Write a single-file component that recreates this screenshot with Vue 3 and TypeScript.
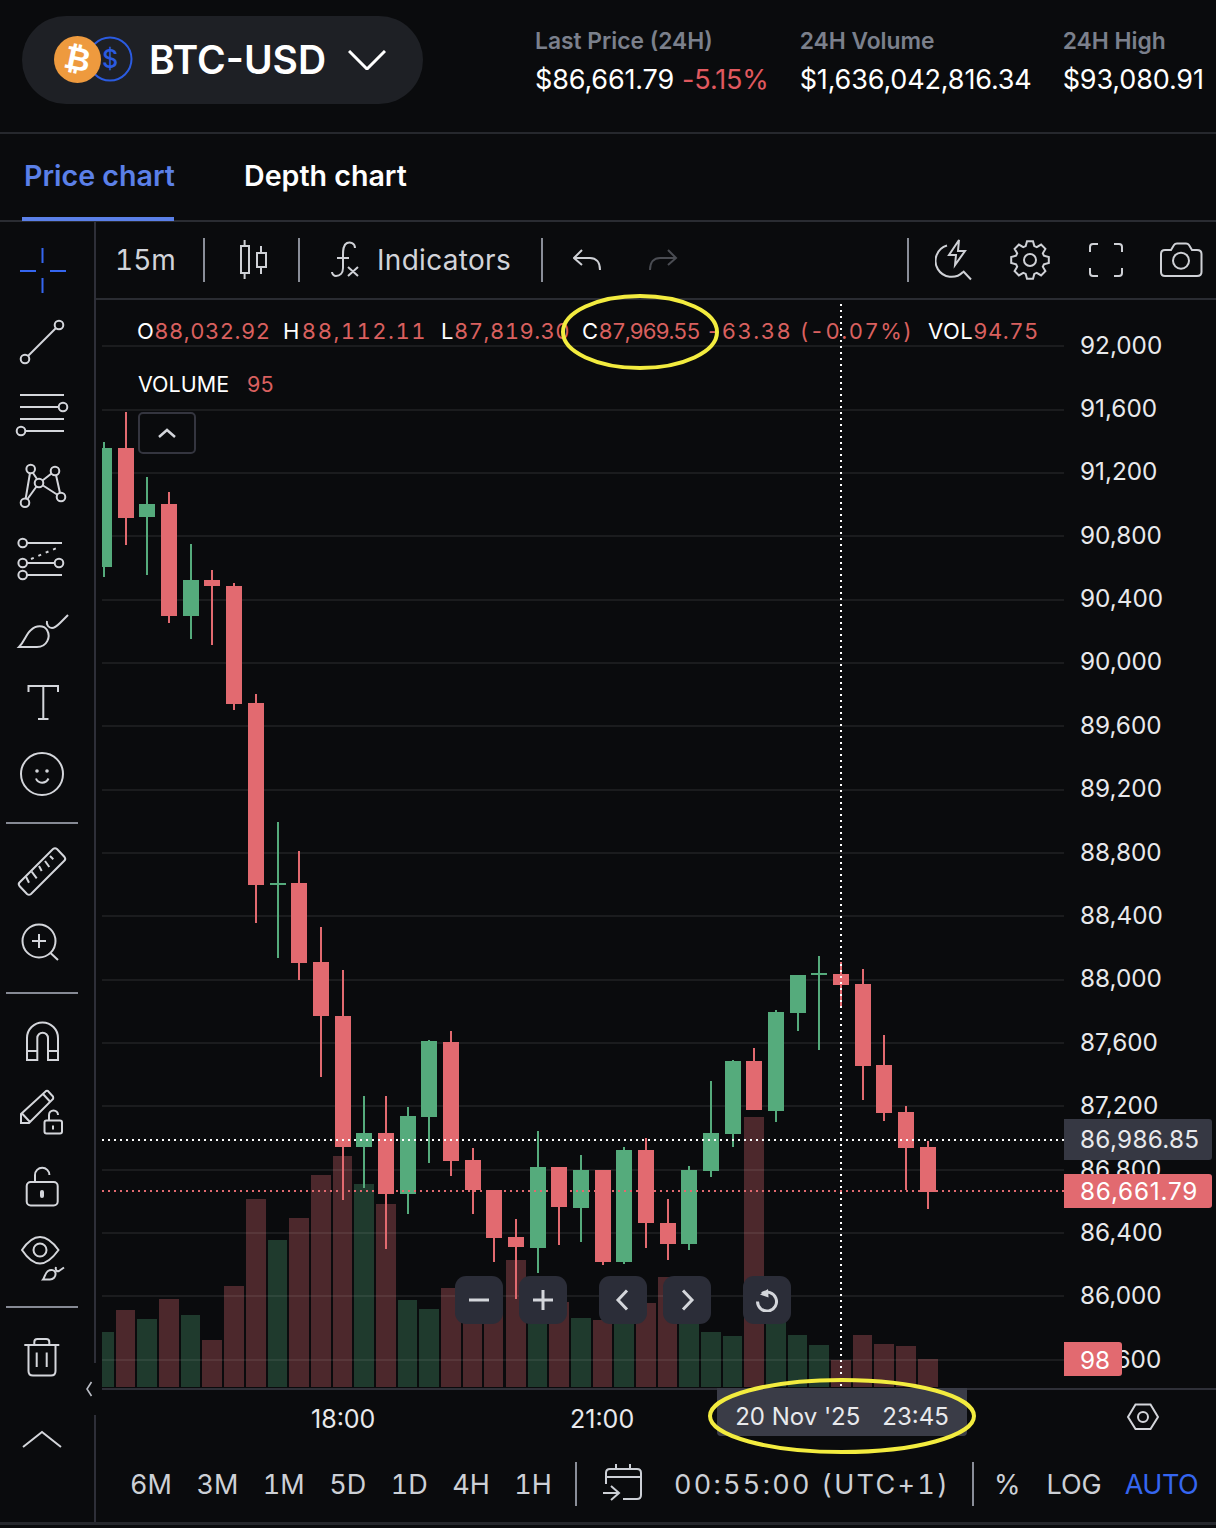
<template>
  <div class="page">
    <header class="top">
      <div class="pair">
        <svg class="pair-icon" width="80" height="50" viewBox="54 38 80 50">
          <circle cx="110" cy="62" r="21.5" fill="none" stroke="#2b5be0" stroke-width="2" />
          <text x="110" y="71" text-anchor="middle" class="usd">$</text>
          <circle cx="77.5" cy="62.5" r="23.5" fill="#ee9a3e" />
          <text x="77.5" y="73" text-anchor="middle" class="btc" transform="rotate(12 77.5 62.5)">₿</text>
        </svg>
        <span class="pair-name">BTC-USD</span>
        <svg width="38" height="20" viewBox="348 50 38 20" class="pair-caret">
          <path d="M349 51 L367 69 L385 51" fill="none" stroke="#fff" stroke-width="3" />
        </svg>
      </div>
      <div class="stats">
        <div v-for="s in stats" :key="s.label" class="stat">
          <div class="stat-label">{{ s.label }}</div>
          <div class="stat-value">
            {{ s.value }}<span v-if="s.change" class="stat-change">{{ s.change }}</span>
          </div>
        </div>
      </div>
    </header>

    <nav class="tabs">
      <a class="tab active">Price chart</a>
      <a class="tab">Depth chart</a>
    </nav>

    <div class="workspace">
      <aside class="tools">
        <svg class="tool" viewBox="12 240 60 60">
          <path d="M20 271 H36 M50 271 H66 M42.5 248 V263 M42.5 278 V293" stroke="#3566f0" />
        </svg>
        <svg class="tool" viewBox="12 312 60 60">
          <circle cx="59" cy="325" r="4.3" /><circle cx="25" cy="359" r="4.3" />
          <path d="M56 328 L28 356" />
        </svg>
        <svg class="tool" viewBox="12 384 60 60">
          <path d="M20 395 H64 M20 407 H58 M20 419 H64 M25 431 H64" />
          <circle cx="63" cy="407" r="4.3" /><circle cx="21" cy="431" r="4.3" />
        </svg>
        <svg class="tool" viewBox="12 456 60 60">
          <circle cx="30.7" cy="469" r="4.3" /><circle cx="55" cy="471" r="4.3" />
          <circle cx="39" cy="483" r="4.3" /><circle cx="61" cy="497" r="4.3" />
          <circle cx="25" cy="502.7" r="4.3" />
          <path d="M33 473 L37 479 M30 473 L25.700 498.500 M42.500 480.500 L51.500 473.500 M43 485.500 L57 494.500 M56 475 L60 493 M36.500 486.500 L27.500 499" />
        </svg>
        <svg class="tool" viewBox="12 528 60 60">
          <circle cx="22.7" cy="543" r="4.3" /><circle cx="22.7" cy="563" r="4.3" />
          <circle cx="59" cy="563" r="4.3" /><circle cx="22.7" cy="575" r="4.3" />
          <path d="M27 543 H62 M27 563 H55 M27 575 H62" />
          <path d="M31 559 L59 547" stroke-dasharray="3 5" />
        </svg>
        <svg class="tool" viewBox="12 600 60 60">
          <path d="M19 647 C25 641 26 634 31 630 C36 625 44 625 47 630 C51 637 47 647 37 647 Z" />
          <path d="M47 621 C46 625 49 628 52 628 C55 628 57 626 60 623 L68 615" />
        </svg>
        <svg class="tool" viewBox="12 672 60 60">
          <path d="M28.500 692 V686 H58 V692 M43.300 686 V719 M38 719 H48.500" />
        </svg>
        <svg class="tool" viewBox="12 744 60 60">
          <circle cx="42" cy="774" r="21" />
          <circle cx="37" cy="771" r="1.800" class="solid" /><circle cx="47" cy="771" r="1.800" class="solid" />
          <path d="M36 778.500 C38 784 46 784 48.500 778.500" />
        </svg>
        <div class="tool-divider"></div>
        <svg class="tool" viewBox="12 842 60 60">
          <path d="M53 849 Q55 847.500 57 849 L64.500 857 Q66 859 64.500 860.500 L31 894 Q29 895.500 27 894 L19.500 886 Q18 884 19.500 882.500 Z" />
          <path d="M26 876.700 L29 882.700 M31.700 871.700 L36.700 878.300 M39 866 L41.700 871 M45 861 L49.300 867 M50 856 L53.300 859.300" />
        </svg>
        <svg class="tool" viewBox="12 914 60 60">
          <circle cx="39" cy="941" r="16.500" />
          <path d="M32 941 H46 M39 934 V948 M50.500 953 L58 960" />
        </svg>
        <div class="tool-divider"></div>
        <svg class="tool" viewBox="12 1012 60 60">
          <path d="M27 1060 V1038 A15.500 15.500 0 0 1 58 1038 V1060 H48 V1038 A5.300 5.300 0 0 0 37.300 1038 V1060 Z M27 1051 H37.300 M48 1051 H58" />
        </svg>
        <svg class="tool" viewBox="12 1084 60 60">
          <path d="M21 1114 L46 1091 Q47 1090.500 48 1091 L53 1096.500 Q53.500 1098 53 1099 L29 1123 H21 Z M43 1094 L49.500 1101 M22.500 1114 L30 1122" />
          <rect x="44.500" y="1120.500" width="17.500" height="13" rx="2" />
          <path d="M49 1120.500 V1115 A4.500 4.500 0 0 1 58 1115 M53 1125.500 V1129.500" />
        </svg>
        <svg class="tool" viewBox="12 1156 60 60">
          <rect x="26.700" y="1182" width="31" height="23.500" rx="4" />
          <path d="M35 1182 V1175 A7.200 7.200 0 0 1 49.400 1175" />
          <rect x="40" y="1190" width="4" height="8" rx="2" class="solid" />
        </svg>
        <svg class="tool" viewBox="12 1228 60 60">
          <path d="M22 1250 C28 1241 34 1237 40 1237 C46 1237 52 1241 58.500 1250 C52 1259 46 1263.500 40 1263.500 C34 1263.500 28 1259 22 1250 Z" />
          <circle cx="40" cy="1250" r="6.500" />
          <path d="M43 1279.500 C45 1277 45 1273 48 1271 C51 1269 55 1270 55.500 1273 C56 1277 53 1279.500 50 1279.500 Z" />
          <path d="M56 1267 C55 1270 57 1272 59 1271 L64 1267.500" />
        </svg>
        <div class="tool-divider"></div>
        <svg class="tool" viewBox="12 1326 60 60">
          <path d="M24.300 1345 H59.300 M34.300 1345 V1342 Q34.300 1339 37.300 1339 H46.300 Q49.300 1339 49.300 1342 V1345" />
          <path d="M28.500 1345 V1371 Q28.500 1375.500 33 1375.500 H51 Q55.500 1375.500 55.500 1371 V1345 M36.700 1352.500 V1367 M46.700 1352.500 V1367" />
        </svg>
        <svg class="tool tool-last" viewBox="12 1410 60 60">
          <path d="M23 1447 L42 1432 L61 1447" />
        </svg>
        <div class="collapse">
          <svg width="8" height="16" viewBox="0 0 8 16">
            <path d="M6.500 1 L2 8 L6.500 15" fill="none" stroke="#b9bcc4" stroke-width="1.600" />
          </svg>
        </div>
      </aside>

      <section class="chart">
        <div class="chart-toolbar">
          <span class="tb-text tb-interval">15m</span>
          <i class="tb-sep sep-a"></i>
          <svg class="tb-icon ic-candle" width="28" height="40" viewBox="240 240 28 40">
            <path d="M244.600 240 V245.700 M244.600 273 V279 M261 246 V252.700 M261 266.700 V274" />
            <rect x="241" y="246" width="8" height="27" /><rect x="257" y="253" width="9" height="14" />
          </svg>
          <i class="tb-sep sep-b"></i>
          <svg class="tb-icon ic-fx" width="28" height="38" viewBox="331 241 28 38">
            <path d="M355 248 C355 243 350 241.500 347 243 C343 245 343 250 343 255 L343 268 C343 273 340 276 336 276 C334 276 332 274 332 272 M337 258 H349 M348 267 L358 276 M358 267 L348 276" />
          </svg>
          <span class="tb-text tb-indicators">Indicators</span>
          <i class="tb-sep sep-c"></i>
          <svg class="tb-icon ic-undo" width="28" height="22" viewBox="573 249 28 22">
            <path d="M582 250 L574 258 L582 265 M574 258 H590 C596 258 600 262 600 270" />
          </svg>
          <svg class="tb-icon ic-redo" width="30" height="22" viewBox="648 249 30 22">
            <path d="M668 250 L676 258 L668 265 M676 258 H660 C654 258 650 262 650 270" />
          </svg>
          <i class="tb-sep sep-d"></i>
          <svg class="tb-icon ic-alert" width="38" height="42" viewBox="935 238 38 42">
            <path d="M947 244.500 A16 16 0 1 0 963 271 M963 270 L971 278.500 M959 239 L949 254 H956 L955 264 L965 250 H958 Z" />
          </svg>
          <svg class="tb-icon ic-gear" width="42" height="42" viewBox="1009 239 42 42">
            <path :d="gearPath" />
            <circle cx="1030" cy="260" r="6" />
          </svg>
          <svg class="tb-icon ic-full" width="34" height="34" viewBox="1089 243 34 34">
            <path d="M1090 252 V247 Q1090 244 1093 244 H1098 M1114 244 H1119 Q1122 244 1122 247 V252 M1122 268 V273 Q1122 276 1119 276 H1114 M1098 276 H1093 Q1090 276 1090 273 V268" />
          </svg>
          <svg class="tb-icon ic-camera" width="44" height="36" viewBox="1160 242 44 36">
            <path d="M1165 250 H1171 L1174 245 Q1175 243.500 1177 243.500 H1186 Q1188 243.500 1189 245 L1192 250 H1197 Q1201.500 250 1201.500 254 V272 Q1201.500 276 1197 276 H1165 Q1161 276 1161 272 V254 Q1161 250 1165 250 Z" />
            <circle cx="1181" cy="260.700" r="8" />
          </svg>
        </div>

        <div class="plot">
          <svg class="canvas" width="968" height="1090" viewBox="96 300 968 1090" shape-rendering="crispEdges">
            <defs>
              <clipPath id="plot-clip"><rect x="102" y="300" width="962" height="1090" /></clipPath>
            </defs>
            <g clip-path="url(#plot-clip)">
              <rect v-for="v in volumes" :key="'v' + v[0]" :x="v[0]" :y="v[2]" :width="v[1] - v[0]" :height="1387 - v[2]"
                :fill="v[3] ? '#1f3a2d' : '#4c282c'" />
              <rect v-for="y in gridLines" :key="'g' + y" x="102" :y="y" width="962" height="2" fill="rgba(255,255,255,.07)" />
              <g v-for="c in candles" :key="'c' + c[0]" :fill="c[5] ? '#55ab7c' : '#e26a70'">
                <rect :x="c[0] + 7" :y="c[1]" width="2" :height="c[4] - c[1]" />
                <rect :x="c[0]" :y="c[2]" width="16" :height="c[3] - c[2]" />
              </g>
              <line x1="102" x2="1064" y1="1191" y2="1191" stroke="#e26a70" stroke-width="2" stroke-dasharray="2 4" />
              <line x1="102" x2="1064" y1="1140" y2="1140" stroke="#fff" stroke-width="2" stroke-dasharray="2 4" />
              <line x1="841" x2="841" y1="304" y2="1388" stroke="#fff" stroke-width="2" stroke-dasharray="2 4" />
              <rect x="102" y="1388" width="962" height="2" fill="#2f3038" />
            </g>
          </svg>

          <div class="legend">
            <div class="ohlc">
              <span v-for="l in ohlc" :key="l.k" class="ohlc-item">
                <b>{{ l.k }}</b><em>{{ l.v }}</em>
              </span>
              <span class="ohlc-item"><em>-63.38 (-0.07%)</em></span>
              <span class="ohlc-item"><b>VOL</b><em>94.75</em></span>
            </div>
            <div class="volume-row"><b>VOLUME</b><em>95</em></div>
            <button class="fold">
              <svg width="20" height="12" viewBox="0 0 20 12">
                <path d="M2 10 L10 3 L18 10" fill="none" stroke="#d4d6db" stroke-width="2.500" />
              </svg>
            </button>
          </div>

          <div class="zoom-buttons">
            <button class="zb"><svg width="24" height="24" viewBox="0 0 24 24"><path d="M2 12 H22" /></svg></button>
            <button class="zb"><svg width="24" height="24" viewBox="0 0 24 24"><path d="M2 12 H22 M12 2 V22" /></svg></button>
            <button class="zb zb-far"><svg width="24" height="24" viewBox="0 0 24 24"><path d="M16 2.500 L7 12 L16 21.500" /></svg></button>
            <button class="zb"><svg width="24" height="24" viewBox="0 0 24 24"><path d="M8 2.500 L17 12 L8 21.500" /></svg></button>
            <button class="zb zb-far">
              <svg width="24" height="24" viewBox="0 0 24 24">
                <path d="M7 5.500 A9.500 9.500 0 1 1 2.500 13.500" />
                <path d="M13 1 L5 6.500 L13.500 9.500 Z" class="zb-fill" />
              </svg>
            </button>
          </div>

          <div class="axis">
            <div v-for="p in prices" :key="p" class="axis-label">{{ p }}</div>
            <div class="tag tag-cross">86,986.85</div>
            <div class="tag tag-last">86,661.79</div>
            <div class="tag tag-vol">98</div>
          </div>
        </div>

        <div class="time-axis">
          <span class="time t-a">18:00</span>
          <span class="time t-b">21:00</span>
          <div class="time-tag"><span>20 Nov '25</span><span>23:45</span></div>
          <svg class="hex" width="32" height="28" viewBox="1127 1403 32 28">
            <path d="M1128 1417 L1135.500 1404.500 H1150.500 L1158 1417 L1150.500 1429 H1135.500 Z" />
            <circle cx="1143" cy="1417" r="5" />
          </svg>
        </div>

        <div class="range-bar">
          <div class="ranges">
            <span v-for="r in ranges" :key="r">{{ r }}</span>
          </div>
          <i class="rb-sep"></i>
          <svg class="cal" width="40" height="38" viewBox="603 1463 40 38">
            <path d="M607 1484 V1473 Q607 1469 611 1469 H638 Q642 1469 642 1473 V1495 Q642 1499 638 1499 H624 M607 1477 H642 M617 1464 V1469 M631 1464 V1469 M604 1493 H620 M612 1486 L620 1493 L612 1500" />
          </svg>
          <span class="clock">00:55:00 (UTC+1)</span>
          <i class="rb-sep rb-sep2"></i>
          <span class="rb-opt pct">%</span>
          <span class="rb-opt log">LOG</span>
          <span class="rb-opt auto">AUTO</span>
        </div>
      </section>
    </div>
    <div class="foot"></div>

    <svg class="marks" width="1216" height="1528" viewBox="0 0 1216 1528">
      <ellipse cx="640" cy="332" rx="77" ry="36" />
      <ellipse cx="842" cy="1416" rx="132" ry="36" />
    </svg>
  </div>
</template>

<script setup lang="ts">
import { computed } from 'vue'

type Candle = [number, number, number, number, number, boolean]
type Volume = [number, number, number, boolean]

const stats = [
  { label: 'Last Price (24H)', value: '$86,661.79', change: '-5.15%' },
  { label: '24H Volume', value: '$1,636,042,816.34', change: '' },
  { label: '24H High', value: '$93,080.91', change: '' },
]

const ohlc = [
  { k: 'O', v: '88,032.92' },
  { k: 'H', v: '88,112.11' },
  { k: 'L', v: '87,819.30' },
  { k: 'C', v: '87,969.55' },
]

const prices = [
  '92,000', '91,600', '91,200', '90,800', '90,400', '90,000', '89,600', '89,200', '88,800',
  '88,400', '88,000', '87,600', '87,200', '86,800', '86,400', '86,000', '85,600',
]

const ranges = ['6M', '3M', '1M', '5D', '1D', '4H', '1H']

const gridLines = [345, 409, 472, 535, 599, 662, 725, 789, 852, 915, 979, 1042, 1105, 1169, 1232, 1295, 1359]

// left edge, wick top, body top, body bottom, wick bottom, up
const candles: Candle[] = [
  [96, 442, 448, 567, 577, true],
  [118, 412, 448, 518, 545, false],
  [139, 477, 504, 517, 575, true],
  [161, 492, 504, 616, 623, false],
  [183, 544, 580, 616, 639, true],
  [204, 570, 580, 586, 645, false],
  [226, 583, 586, 704, 710, false],
  [248, 694, 703, 885, 923, false],
  [270, 822, 883, 885, 958, true],
  [291, 851, 883, 963, 980, false],
  [313, 927, 962, 1016, 1077, false],
  [335, 970, 1016, 1147, 1200, false],
  [356, 1096, 1133, 1147, 1188, true],
  [378, 1096, 1133, 1194, 1249, false],
  [400, 1107, 1116, 1194, 1214, true],
  [421, 1040, 1041, 1117, 1163, true],
  [443, 1031, 1042, 1161, 1176, false],
  [465, 1148, 1160, 1190, 1214, false],
  [486, 1190, 1190, 1238, 1262, false],
  [508, 1219, 1237, 1247, 1299, false],
  [530, 1131, 1167, 1248, 1273, true],
  [551, 1167, 1167, 1207, 1245, false],
  [573, 1155, 1170, 1208, 1242, true],
  [595, 1170, 1170, 1262, 1265, false],
  [616, 1147, 1150, 1262, 1264, true],
  [638, 1138, 1150, 1223, 1248, false],
  [660, 1199, 1223, 1244, 1260, false],
  [681, 1166, 1170, 1244, 1250, true],
  [703, 1081, 1133, 1171, 1177, true],
  [725, 1060, 1061, 1134, 1147, true],
  [746, 1048, 1061, 1110, 1110, false],
  [768, 1010, 1012, 1111, 1122, true],
  [790, 975, 975, 1013, 1031, true],
  [811, 956, 973, 975, 1050, true],
  [833, 962, 974, 985, 1006, false],
  [855, 969, 984, 1066, 1100, false],
  [876, 1035, 1065, 1113, 1121, false],
  [898, 1106, 1112, 1148, 1190, false],
  [920, 1141, 1147, 1192, 1209, false],
]

// left, right, top, up
const volumes: Volume[] = [
  [94, 114, 1332, true], [116, 135, 1310, false], [137, 157, 1319, true], [159, 179, 1299, false],
  [181, 200, 1315, true], [202, 222, 1340, false], [224, 244, 1286, false], [246, 266, 1199, false],
  [268, 287, 1240, true], [289, 309, 1218, false], [311, 331, 1175, false], [333, 352, 1156, false],
  [354, 374, 1184, true], [376, 396, 1204, false], [398, 417, 1300, true], [419, 439, 1309, true],
  [441, 461, 1288, false], [463, 482, 1318, false], [484, 503, 1290, false], [506, 526, 1260, false],
  [528, 547, 1320, true], [549, 569, 1302, false], [571, 591, 1318, true], [593, 612, 1320, false],
  [614, 634, 1310, true], [636, 656, 1303, false], [658, 677, 1277, false], [679, 699, 1315, true],
  [701, 721, 1332, true], [723, 742, 1336, true], [744, 764, 1117, false], [766, 786, 1310, true],
  [788, 807, 1335, true], [809, 829, 1345, true], [831, 851, 1360, false], [853, 872, 1335, false],
  [874, 894, 1344, false], [896, 916, 1346, false], [918, 938, 1359, false],
]

// eight teeth around the centre of the toolbar's settings icon
const gearPath = computed(() => {
  const cx = 1030
  const cy = 260
  const pts: string[] = []
  for (let i = 0; i < 8; i++) {
    const a = (i * Math.PI) / 4 - Math.PI / 2
    const spread = [-0.3, -0.16, 0.16, 0.3]
    const radius = [14.5, 19, 19, 14.5]
    spread.forEach((s, j) => {
      pts.push(`${(cx + radius[j] * Math.cos(a + s)).toFixed(1)} ${(cy + radius[j] * Math.sin(a + s)).toFixed(1)}`)
    })
  }
  return `M${pts.join(' L')} Z`
})
</script>

<style>
html,
body {
  margin: 0;
  background: #0a0b0d;
}
</style>

<style scoped>
.page {
  position: relative;
  width: 1216px;
  height: 1528px;
  overflow: hidden;
  background: #0a0b0d;
  color: #fff;
  font-family: Inter, 'Liberation Sans', sans-serif;
}

.top {
  display: flex;
  height: 132px;
  padding-left: 22px;
  border-bottom: 2px solid #26282d;
}

.pair {
  display: flex;
  align-items: center;
  flex: none;
  width: 401px;
  height: 88px;
  margin-top: 16px;
  border-radius: 44px;
  background: #1e2025;
}

.pair-icon {
  margin-left: 32px;
}

.usd {
  fill: #2b5be0;
  font-size: 25px;
  font-weight: 500;
}

.btc {
  fill: #fff;
  font-family: 'DejaVu Sans', sans-serif;
  font-size: 32px;
  font-weight: 700;
}

.pair-name {
  margin-left: 15px;
  font-size: 39px;
  font-weight: 600;
  line-height: 88px;
}

.pair-caret {
  margin-left: 22px;
}

.stats {
  display: flex;
  gap: 31px;
  margin-left: 112px;
  padding-top: 28px;
}

.stat {
  white-space: nowrap;
}

.stat-label {
  color: #7b808c;
  font-size: 22.8px;
  font-weight: 600;
  line-height: 26px;
}

.stat-value {
  margin-top: 13px;
  font-size: 27px;
  letter-spacing: -0.15px;
  line-height: 26px;
}

.stat-change {
  margin-left: 8px;
  color: #e0595f;
}

.tabs {
  display: flex;
  gap: 68px;
  height: 86px;
  padding-left: 22px;
  border-bottom: 2px solid #2a2c32;
}

.tab {
  height: 83px;
  padding-left: 2px;
  font-size: 28.6px;
  font-weight: 600;
  line-height: 84px;
  white-space: nowrap;
}

.tab.active {
  width: 152px;
  height: 87px;
  margin-bottom: -2px;
  padding: 0;
  color: #5b80e8;
  box-shadow: inset 0 -4px 0 #5b80e8;
  text-indent: 2px;
}

.workspace {
  display: flex;
  height: 1300px;
}

.tools {
  position: relative;
  display: flex;
  flex-direction: column;
  align-items: flex-start;
  flex: none;
  width: 94px;
  padding-top: 18px;
  border-right: 2px solid #2e2f38;
}

.tool {
  flex: none;
  width: 60px;
  height: 60px;
  margin: 0 0 12px 12px;
  fill: none;
  stroke: #d4d6db;
  stroke-width: 2;
}

.tool .solid {
  fill: #d4d6db;
  stroke: none;
}

.tool-last {
  margin-top: 12px;
}

.tool-divider {
  flex: none;
  width: 72px;
  height: 2px;
  margin: 6px 0 18px 6px;
  background: #868a94;
}

.collapse {
  position: absolute;
  top: 1141px;
  right: -2px;
  display: flex;
  align-items: center;
  justify-content: flex-start;
  width: 11px;
  height: 52px;
  background: #0a0b0d;
}

.chart {
  flex: 1;
  min-width: 0;
}

.chart-toolbar {
  display: flex;
  align-items: center;
  height: 76px;
  border-bottom: 2px solid #2a2c32;
}

.tb-text {
  flex: none;
  color: #d2d4da;
  font-size: 28px;
  line-height: 76px;
  white-space: nowrap;
}

.tb-interval {
  width: 60px;
  margin-left: 19px;
  font-variant-numeric: tabular-nums;
}

.tb-indicators {
  width: 134px;
  margin-left: 18px;
  letter-spacing: 0.3px;
}

.tb-sep {
  flex: none;
  width: 2px;
  height: 44px;
  background: #8a8e98;
}

.sep-a {
  margin-left: 28px;
}

.sep-b {
  margin-left: 30px;
}

.sep-c {
  margin-left: 30px;
}

.sep-d {
  margin-left: 229px;
}

.tb-icon {
  flex: none;
  fill: none;
  stroke: #cfd1d6;
  stroke-width: 2;
}

.ic-candle {
  margin-left: 35px;
}

.ic-fx {
  margin-left: 31px;
}

.ic-undo {
  margin-left: 30px;
}

.ic-redo {
  margin-left: 47px;
  stroke: #4a4c52;
}

.ic-alert {
  margin-left: 26px;
}

.ic-gear {
  margin-left: 36px;
}

.ic-full {
  margin-left: 38px;
}

.ic-camera {
  margin-left: 37px;
}

.plot {
  position: relative;
  display: flex;
  height: 1090px;
}

.canvas {
  display: block;
  flex: none;
}

.legend {
  position: absolute;
  top: 0;
  left: 41px;
}

.legend b {
  color: #fff;
  font-weight: 400;
}

.legend em {
  color: #d9605f;
  font-style: normal;
}

.ohlc {
  display: flex;
  height: 60px;
  font-size: 22px;
  letter-spacing: 0.5px;
  font-variant-numeric: tabular-nums;
  line-height: 62px;
  white-space: nowrap;
}

.ohlc-item:nth-child(1) {
  width: 146px;
}

.ohlc-item:nth-child(2) {
  width: 158px;
}

.ohlc-item:nth-child(2) em {
  margin-left: 2px;
  letter-spacing: 1.5px;
}

.ohlc-item:nth-child(3) {
  width: 141px;
}

.ohlc-item:nth-child(4) {
  width: 124px;
}

.ohlc-item:nth-child(4) em {
  letter-spacing: -1.2px;
}

.ohlc-item:nth-child(5) {
  width: 222px;
}

.ohlc-item:nth-child(5) em {
  letter-spacing: 1.5px;
}

.volume-row {
  display: flex;
  gap: 18px;
  margin-left: 1px;
  font-size: 21.5px;
  line-height: 48px;
}

.fold {
  display: flex;
  align-items: center;
  justify-content: center;
  box-sizing: border-box;
  width: 58px;
  height: 42px;
  margin: 4px 0 0 1px;
  padding: 0;
  border: 2px solid #34353f;
  border-radius: 5px;
  background: transparent;
}

.zoom-buttons {
  position: absolute;
  top: 976px;
  left: 359px;
  display: flex;
  gap: 16px;
}

.zb {
  display: flex;
  align-items: center;
  justify-content: center;
  width: 48px;
  height: 48px;
  padding: 0;
  border: none;
  border-radius: 11px;
  background: #2b2d38;
}

.zb-far {
  margin-left: 16px;
}

.zb svg {
  fill: none;
  stroke: #d4d6db;
  stroke-width: 3;
}

.zb .zb-fill {
  fill: #d4d6db;
  stroke: none;
}

.axis {
  position: relative;
  flex: 1;
  box-sizing: border-box;
  padding: 13.5px 0 0 16px;
  border-bottom: 2px solid #2f3038;
  color: #e8e9ec;
  font-size: 24.3px;
}

.axis-label {
  height: 63.4px;
  line-height: 63.4px;
}

.tag {
  position: absolute;
  left: 0;
  box-sizing: border-box;
  padding-left: 16px;
  border-radius: 0 3px 3px 0;
}

.tag-cross {
  top: 819px;
  width: 148px;
  height: 41px;
  background: #363843;
  line-height: 41px;
  letter-spacing: 0.3px;
}

.tag-last {
  top: 874px;
  width: 148px;
  height: 34px;
  background: #e26a70;
  color: #fff;
  line-height: 34px;
  letter-spacing: 0.8px;
}

.tag-vol {
  top: 1042px;
  width: 58px;
  height: 34px;
  background: #e26a70;
  color: #fff;
  line-height: 36px;
}

.time-axis {
  position: relative;
  display: flex;
  align-items: center;
  height: 58px;
  color: #e8e9ec;
  font-size: 25px;
}

.time {
  position: absolute;
  top: 14px;
  line-height: 30px;
}

.t-a {
  left: 215px;
}

.t-b {
  left: 474px;
}

.time-tag {
  position: absolute;
  top: -2px;
  left: 621px;
  display: flex;
  gap: 22px;
  justify-content: center;
  box-sizing: border-box;
  width: 250px;
  height: 48px;
  border-radius: 0 0 4px 4px;
  background: #3a3c47;
  font-size: 24px;
  line-height: 58px;
}

.hex {
  position: absolute;
  top: 13px;
  left: 1031px;
  fill: none;
  stroke: #d4d6db;
  stroke-width: 2;
}

.range-bar {
  display: flex;
  align-items: center;
  height: 72px;
  padding-bottom: 2px;
  color: #cdd0d6;
  font-size: 27px;
  font-variant-numeric: tabular-nums;
}

.ranges {
  display: flex;
  gap: 24.5px;
  margin-left: 34px;
}

.rb-sep {
  flex: none;
  width: 2px;
  height: 44px;
  margin-left: 23px;
  background: #8a8e98;
}

.cal {
  flex: none;
  margin: 0 0 4px 25px;
  fill: none;
  stroke: #cdd0d6;
  stroke-width: 2;
}

.clock {
  flex: none;
  width: 272px;
  margin-left: 32px;
  letter-spacing: 2.3px;
  white-space: nowrap;
}

.rb-sep2 {
  margin-left: 26px;
}

.rb-opt {
  margin-left: 26px;
}

.pct {
  margin-left: 20px;
}

.auto {
  margin-left: 23px;
  color: #3566f0;
  letter-spacing: -0.5px;
}

.foot {
  height: 3px;
  background: #26282d;
}

.marks {
  position: absolute;
  top: 0;
  left: 0;
  fill: none;
  stroke: #f3ec3f;
  stroke-width: 4;
  pointer-events: none;
}
</style>
